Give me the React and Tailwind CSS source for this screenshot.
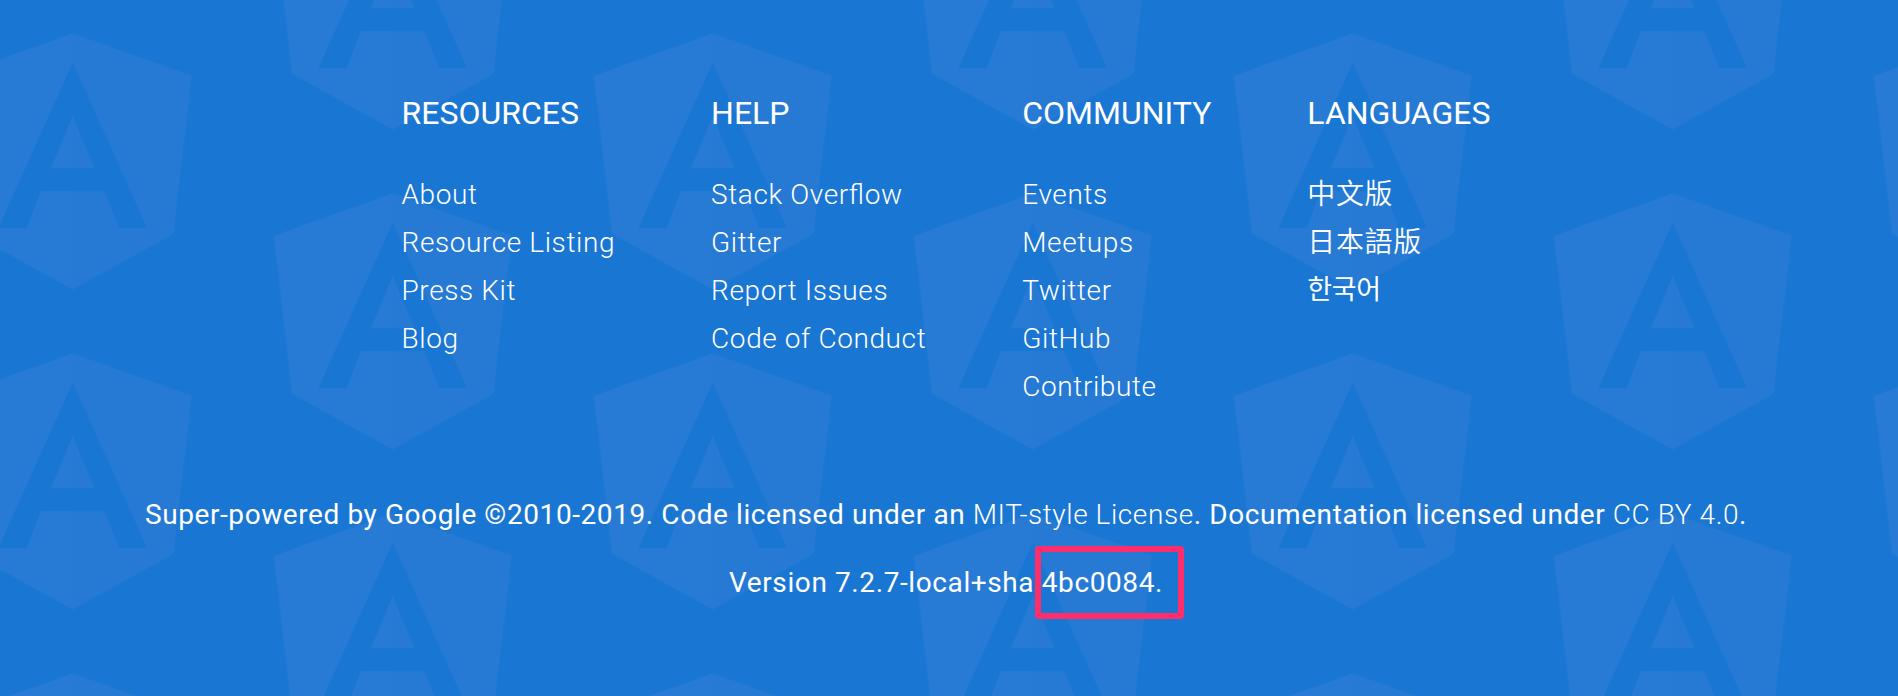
const columns = [
  {
    title: "RESOURCES",
    links: ["About", "Resource Listing", "Press Kit", "Blog"],
  },
  {
    title: "HELP",
    links: ["Stack Overflow", "Gitter", "Report Issues", "Code of Conduct"],
  },
  {
    title: "COMMUNITY",
    links: ["Events", "Meetups", "Twitter", "GitHub", "Contribute"],
  },
  {
    title: "LANGUAGES",
    links: ["中文版", "日本語版", "한국어"],
  },
];

const cjkFonts = {
  中文版: "relative -top-[3px] font-['Noto_Sans_CJK_SC',sans-serif] font-[350]",
  日本語版: "relative -top-[3px] font-['Noto_Sans_CJK_SC',sans-serif] font-[350]",
  한국어: "relative -top-[3px] font-['Noto_Sans_CJK_KR',sans-serif] text-[27px] tracking-[-0.4px] font-normal",
};

function Shield({ x, y }) {
  return (
    <g transform={`translate(${x} ${y})`} fillRule="evenodd">
      <path
        fill="#277bd5"
        d="M0 0L-118.9 42.4L-100.7 200.4L0 256.3V157.7H-31.8L-46.2 195H-74.5L0 29V82.7L-21.7 135H0Z"
      />
      <path
        fill="#267ad4"
        d="M0 0L118.9 42.4L100.7 200.4L0 256.3V157.7H31.8L46.2 195H74.5L0 29V82.7L21.7 135H0Z"
      />
    </g>
  );
}

function ShieldBackdrop() {
  return (
    <svg className="absolute inset-0 h-full w-full" aria-hidden="true">
      <defs>
        <pattern id="shields" x="-87.3" y="33.3" width="640" height="320" patternUnits="userSpaceOnUse">
          <Shield x={160} y={0} />
          <Shield x={480} y={-160} />
          <Shield x={480} y={160} />
        </pattern>
      </defs>
      <rect width="100%" height="100%" fill="url(#shields)" />
    </svg>
  );
}

function LinkLabel({ text }) {
  const at = text.indexOf("fl");
  if (at < 0) return text;
  return (
    <>
      {text.slice(0, at)}
      <span className="mr-[0.6px] tracking-normal">fl</span>
      {text.slice(at + 2)}
    </>
  );
}

function FooterColumn({ title, links }) {
  return (
    <div>
      <h3 className="text-[32px] leading-[40px] tracking-normal">{title}</h3>
      <ul className="mt-[38px] font-light">
        {links.map((link) => (
          <li key={link} className="h-12 leading-[48px]">
            <a href="#" className={cjkFonts[link]}>
              <LinkLabel text={link} />
            </a>
          </li>
        ))}
      </ul>
    </div>
  );
}

export default function App() {
  return (
    <footer className="relative h-[696px] w-full overflow-hidden bg-[#1976d2] font-[Roboto,sans-serif] text-[28px] tracking-[0.6px] text-white">
      <ShieldBackdrop />
      <div className="relative flex flex-col items-center pt-[93px] pr-[6px]">
        <div className="flex h-[318px] gap-24">
          {columns.map((column) => (
            <FooterColumn key={column.title} {...column} />
          ))}
        </div>
        <p className="mt-20 leading-[48px] tracking-[0.585px] whitespace-nowrap">
          Super-powered by Google ©2010-2019. Code licensed under an{" "}
          <a href="#" className="font-light">MIT-style License</a>. Documentation licensed under{" "}
          <a href="#" className="font-light">CC BY 4.0</a>.
        </p>
        <p className="mt-5 leading-[48px] whitespace-nowrap">
          Version 7.2.7-local+sha{" "}
          <span className="relative inline-block">
            4bc0084.
            <span className="absolute -top-[13px] -left-[6.7px] h-[73px] w-[148.5px] rounded-[4px] border-[6px] border-[#ff2d6b]" />
          </span>
        </p>
      </div>
    </footer>
  );
}
